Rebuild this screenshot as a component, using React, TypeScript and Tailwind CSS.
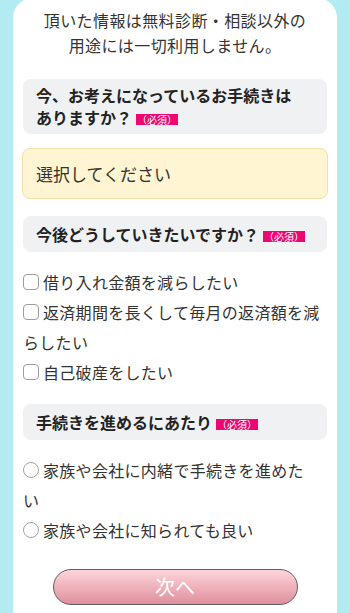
import React from "react";

const font = "font-['Noto_Sans_CJK_JP','Noto_Sans',sans-serif]";

function Required() {
  return (
    <span className="ml-[4px] inline-block bg-[#ec0870] px-[1px] align-baseline text-[10px] font-normal leading-[11px] text-white">
      （必須）
    </span>
  );
}

function Question({ children }: { children: React.ReactNode }) {
  return (
    <div className="rounded-[8px] bg-[#f0f1f3] py-[7px] pl-[13px] pr-[20px] text-[16px] font-bold leading-[22px] text-[#222]">
      {children}
      <Required />
    </div>
  );
}

function Check({ label, round }: { label: string; round?: boolean }) {
  return (
    <label className="block text-[16px] leading-[30px] tracking-[0.3px] text-[#333]">
      <span
        className={
          round
            ? "mr-[4px] inline-block h-[16px] w-[16px] rounded-full border border-[#a3a3a3] bg-white align-[-1px]"
            : "mr-[4px] inline-block h-[16px] w-[16px] rounded-[4px] border border-[#9d9d9d] bg-white align-[-1px]"
        }
      />
      {label}
    </label>
  );
}

export default function App() {
  return (
    <div className={`min-h-screen overflow-hidden bg-[#b2ebf2] px-[13px] ${font}`}>
      <div className="-mt-[2px] rounded-t-[20px] bg-white px-[10px] pb-[24px] pt-[10px]">
        <p className="text-center text-[16px] leading-[25px] tracking-[0.4px] text-[#333]">
          頂いた情報は無料診断・相談以外の
          <br />
          用途には一切利用しません。
        </p>

        <div className="mt-[21px] rounded-[8px] bg-[#f0f1f3] pb-[6px] pl-[13px] pr-[20px] pt-[5px] text-[16px] font-bold leading-[22px] text-[#222]">
          今、お考えになっているお手続きはありますか？
          <Required />
        </div>

        <div className="-mx-[1px] mt-[14px] flex h-[51px] items-center rounded-[8px] border border-[#f2e1a4] bg-[#fff5d2] px-[13px] text-[17px] text-[#333]">
          選択してください
        </div>

        <div className="mt-[17px]">
          <Question>今後どうしていきたいですか？</Question>
        </div>

        <div className="mt-[15px]">
          <Check label="借り入れ金額を減らしたい" />
          <Check label="返済期間を長くして毎月の返済額を減らしたい" />
          <Check label="自己破産をしたい" />
        </div>

        <div className="mt-[17px]">
          <Question>手続きを進めるにあたり</Question>
        </div>

        <div className="mt-[15px] pr-[12px]">
          <Check round label="家族や会社に内緒で手続きを進めたい" />
          <Check round label="家族や会社に知られても良い" />
        </div>

        <div className="mt-[24px] flex justify-center">
          <button className="h-[36px] w-[245px] rounded-full border border-[#5f5f5f] bg-gradient-to-b from-[#fdd5dc] to-[#df8f9c] text-[20px] leading-none text-white">
            次へ
          </button>
        </div>
      </div>
    </div>
  );
}
